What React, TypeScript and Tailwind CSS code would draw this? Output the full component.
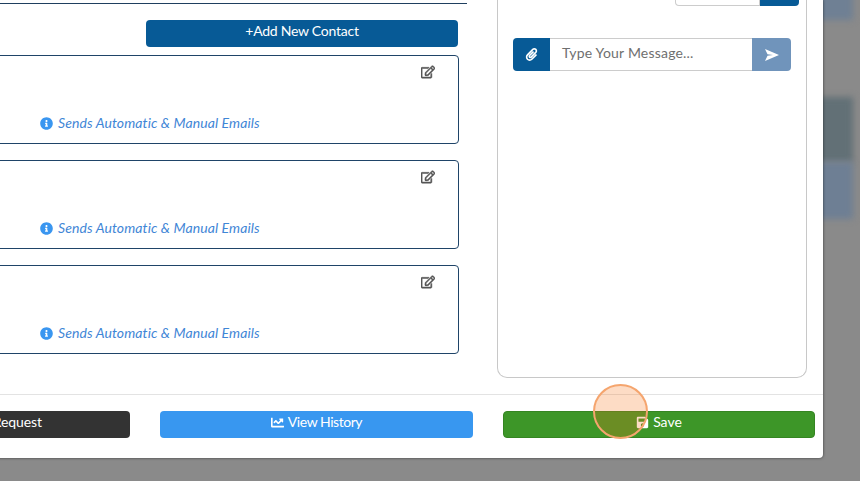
import { FaChartLine, FaInfoCircle, FaPaperclip, FaRegEdit, FaSave } from "react-icons/fa";

function ContactCard() {
  return (
    <div className="h-[89px] rounded-[4px] border border-[#1f4468] bg-white flex flex-col">
      <div className="flex justify-end pt-[9px] pr-[23px]">
        <FaRegEdit className="text-[14px] text-[#555555] stroke-[#555555] stroke-[20px]" />
      </div>
      <div className="mt-auto mb-[10px] ml-[222px] flex items-center gap-[5px] text-[14px] leading-[20px] italic text-[#3f86d6] tracking-[0.1px]">
        <FaInfoCircle className="text-[13px] text-[#3a96f0]" />
        <span>Sends Automatic &amp; Manual Emails</span>
      </div>
    </div>
  );
}

export default function App() {
  return (
    <div className="relative w-[860px] h-[481px] overflow-hidden bg-[#8a8a8a] font-['Lato','Liberation_Sans',sans-serif]">
      {/* blurred page behind the modal */}
      <div className="absolute left-[815px] top-[-20px] w-[38px] h-[40px] bg-[#6f8094] blur-[3px]" />
      <div className="absolute left-[815px] top-[97px] w-[38px] h-[65px] bg-[#627076] blur-[3px]" />
      <div className="absolute left-[815px] top-[162px] w-[38px] h-[57px] bg-[#6e7f94] blur-[3px]" />

      <div className="relative -ml-[183px] w-[1006px] h-[458px] bg-white rounded-br-[4px] shadow-[0_0_3px_rgba(0,0,0,0.6)] flex flex-col">
        <div className="h-[394px] flex">
          <div className="w-[650px] pt-[3px]">
            <div className="border-t border-[#1f3f5f] h-[17px]" />
            <div className="pr-[9px] flex justify-end">
              <button className="w-[312px] h-[27px] rounded-[4px] bg-[#075a96] text-white text-[14px] leading-[22px] pb-[5px] tracking-[-0.25px]">
                +Add New Contact
              </button>
            </div>
            <div className="mt-[8px] pr-[8px] flex flex-col gap-[16px]">
              <ContactCard />
              <ContactCard />
              <ContactCard />
            </div>
          </div>

          <div className="ml-[30px] w-[310px] h-[378px] rounded-b-[10px] border-x border-b border-[#c8c8c8] px-[15px]">
            <div className="flex justify-end -mr-[8px]">
              <div className="w-[85px] h-[6px] bg-white border-x border-b border-[#cccccc] rounded-bl-[4px]" />
              <div className="w-[39px] h-[6px] bg-[#075a96] rounded-br-[4px]" />
            </div>
            <div className="mt-[32px] h-[33px] flex">
              <div className="w-[37px] bg-[#075a96] rounded-l-[4px] flex items-center justify-center">
                <FaPaperclip className="text-[13px] text-white" />
              </div>
              <div className="flex-1 border-y border-[#cccccc] pl-[12px] text-[14px] leading-[27px] text-[#6f6f6f] tracking-[0.2px]">
                Type Your Message...
              </div>
              <div className="w-[39px] bg-[#7094bb] rounded-r-[4px] flex items-center justify-center">
                <svg width="14" height="12" viewBox="0 0 14 12" fill="white">
                  <path d="M0 0 L14 6 L0 12 L2.5 6.8 L8 6 L2.5 5.2 Z" />
                </svg>
              </div>
            </div>
          </div>
        </div>

        <div className="flex-1 border-t border-[#e3e3e3] pt-[16px] pr-[8px] pl-[30px] flex gap-[30px]">
          <button className="w-[283px] h-[27px] rounded-[4px] bg-[#333333] text-white text-[14px] pb-[5px] leading-[22px] flex justify-end pr-[88px] tracking-[-0.1px]">
            Request
          </button>
          <button className="w-[313px] h-[27px] rounded-[4px] bg-[#3897f0] text-white text-[14px] pb-[5px] leading-[22px] flex items-center justify-center gap-[4px] tracking-[-0.45px]">
            <FaChartLine className="text-[13px]" />
            View History
          </button>
          <button className="w-[312px] h-[27px] rounded-[4px] bg-[#3d9628] border border-[#358522] text-white text-[14px] pb-[5px] leading-[22px] flex items-center justify-center gap-[4px]">
            <FaSave className="text-[13px]" />
            Save
          </button>
        </div>
      </div>

      {/* click marker */}
      <div className="absolute left-[593px] top-[384px] w-[55px] h-[55px] rounded-full border-2 border-[#f5a56e] bg-[#f97316]/25" />
    </div>
  );
}
